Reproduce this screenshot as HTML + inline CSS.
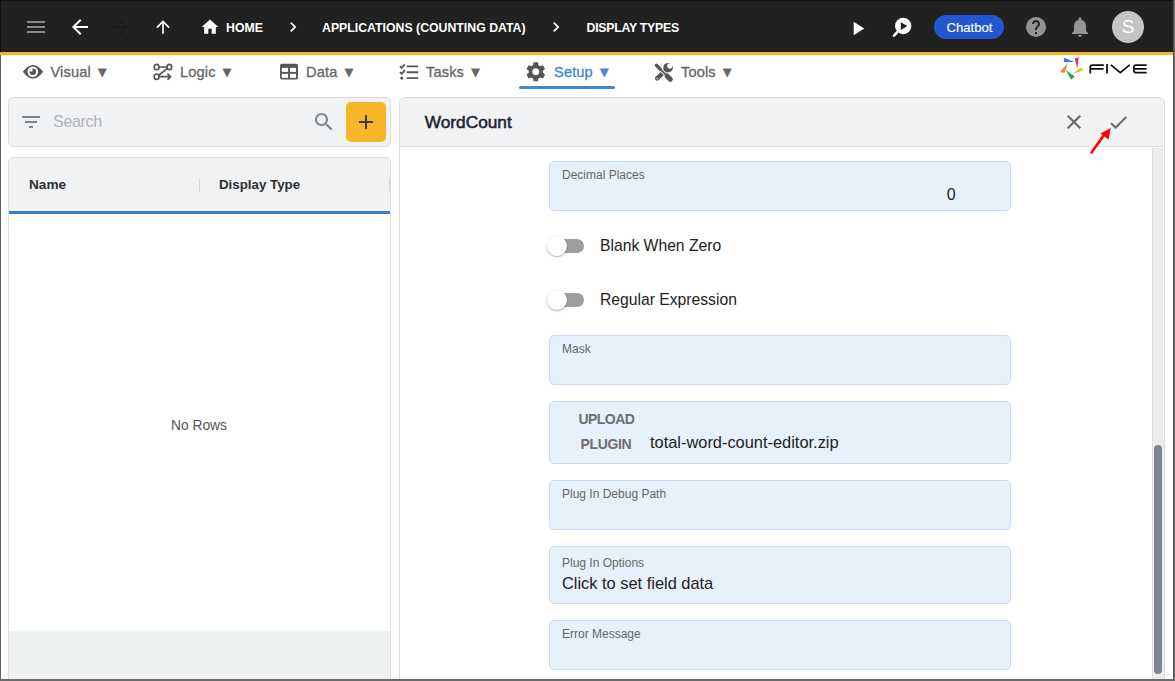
<!DOCTYPE html>
<html><head><meta charset="utf-8">
<style>
*{box-sizing:border-box;margin:0;padding:0}
html,body{width:1175px;height:681px;overflow:hidden;background:#fff;font-family:"Liberation Sans",sans-serif}
.a{position:absolute}
.t{position:absolute;white-space:nowrap;line-height:1}
svg{position:absolute;display:block}
#top{left:0;top:0;width:1175px;height:52px;background:#212121}
#yl{left:0;top:52px;width:1175px;height:3px;background:#f8b526}
.crumb{color:#fff;font-weight:700;font-size:12.3px}
.menu{color:#666;font-size:14.6px;letter-spacing:0.15px;-webkit-text-stroke:0.3px #666}
.panel{background:#f1f2f4;border:1px solid #dcdde0;border-radius:5px}
.field{position:absolute;left:549px;width:462px;background:#e8f1fb;border:1px solid #cbdcf0;border-radius:5px}
.lbl{position:absolute;left:12px;font-size:12px;color:#666;white-space:nowrap;line-height:1}
.val{font-size:16px;color:#222}
</style></head><body>
<!-- top bar -->
<div id="top" class="a"></div>
<div id="yl" class="a"></div>
<!-- hamburger -->
<svg style="left:24px;top:15px" width="24" height="24" viewBox="0 0 24 24"><path fill="#8a8a8a" d="M3 18h18v-2H3v2zm0-5h18v-2H3v2zm0-7v2h18V6H3z"/></svg>
<!-- back -->
<svg style="left:68px;top:15px" width="24" height="24" viewBox="0 0 24 24"><path fill="#fff" d="M20 11H7.83l5.59-5.59L12 4l-8 8 8 8 1.41-1.41L7.83 13H20v-2z"/></svg>
<!-- forward -->
<svg style="left:108px;top:15px" width="24" height="24" viewBox="0 0 24 24"><path fill="#1a1a1a" d="M12 4l-1.41 1.41L16.17 11H4v2h12.17l-5.58 5.59L12 20l8-8z"/></svg>
<!-- up -->
<svg style="left:153px;top:17px" width="20" height="20" viewBox="0 0 24 24"><path fill="#fff" d="M4 12l1.41 1.41L11 7.83V20h2V7.83l5.58 5.59L20 12l-8-8-8 8z"/></svg>
<!-- home -->
<svg style="left:200px;top:17px" width="20" height="20" viewBox="0 0 24 24"><path fill="#fff" d="M10 20v-6h4v6h5v-8h3L12 3 2 12h3v8z"/></svg>
<div class="t crumb" style="left:226px;top:22px">HOME</div>
<svg style="left:283px;top:17px" width="20" height="20" viewBox="0 0 24 24"><path fill="#fff" d="M10 6L8.59 7.41 13.17 12l-4.58 4.59L10 18l6-6z"/></svg>
<div class="t crumb" style="left:322px;top:22px">APPLICATIONS (COUNTING DATA)</div>
<svg style="left:545.5px;top:17px" width="20" height="20" viewBox="0 0 24 24"><path fill="#fff" d="M10 6L8.59 7.41 13.17 12l-4.58 4.59L10 18l6-6z"/></svg>
<div class="t crumb" style="left:586.5px;top:22px;letter-spacing:-0.25px">DISPLAY TYPES</div>
<!-- play -->
<svg style="left:846px;top:16.5px" width="23" height="23" viewBox="0 0 24 24"><path fill="#fff" d="M8 5v14l11-7z"/></svg>
<!-- search play -->
<svg style="left:891px;top:17px" width="22" height="22" viewBox="0 0 22 22">
<circle cx="12.2" cy="9" r="8.2" fill="#fff"/>
<path d="M9.8 5.3v7.6l6.6-3.8z" fill="#212121"/>
<path d="M6 15.5L3 18.7" stroke="#fff" stroke-width="2.6" stroke-linecap="round"/>
</svg>
<!-- chatbot -->
<div class="a" style="left:934px;top:15px;width:70px;height:24px;border-radius:12px;background:#2357cf"></div>
<div class="t" style="left:946.5px;top:21px;color:#fff;font-size:13.1px;-webkit-text-stroke:0.15px #fff">Chatbot</div>
<!-- help -->
<svg style="left:1024px;top:15px" width="24" height="24" viewBox="0 0 24 24"><circle cx="12" cy="12" r="10" fill="#949494"/><path fill="#212121" d="M11 19h2v-2h-2v2zm4.07-7.75l-.9.92C13.45 12.9 13 13.5 13 15h-2v-.5c0-1.1.45-2.1 1.17-2.83l1.24-1.26c.37-.36.59-.86.59-1.41 0-1.1-.9-2-2-2s-2 .9-2 2H8c0-2.210 1.79-4 4-4s4 1.79 4 4c0 .88-.36 1.68-.93 2.25z"/></svg>
<!-- bell -->
<svg style="left:1068px;top:15px" width="24" height="24" viewBox="0 0 24 24"><path fill="#949494" d="M12 22c1.1 0 2-.9 2-2h-4c0 1.1.89 2 2 2zm6-6v-5c0-3.07-1.64-5.64-4.5-6.32V4c0-.83-.67-1.5-1.5-1.5s-1.5.67-1.5 1.5v.68C7.63 5.36 6 7.92 6 11v5l-2 2v1h16v-1l-2-2z"/></svg>
<!-- avatar -->
<div class="a" style="left:1112px;top:11px;width:32px;height:32px;border-radius:50%;background:#c4c4c4"></div>
<div class="t" style="left:1112px;top:17px;width:32px;text-align:center;color:#fff;font-size:19px">S</div>

<!-- menu bar -->
<svg style="left:18px;top:58px" width="30" height="28" viewBox="18 58 30 28">
<path d="M22.9 71.8Q33 58.2 43.1 71.8Q33 85.4 22.9 71.8Z" fill="#555"/>
<circle cx="32.8" cy="71.8" r="5.3" fill="#fff"/>
<circle cx="32.8" cy="71.8" r="3.3" fill="#555"/>
<path d="M32.5 71.5V68.6A3 3 0 0 0 29.6 71.5Z" fill="#fff"/>
</svg>
<div class="t menu" style="left:50.5px;top:64.5px">Visual ▼</div>
<div class="t menu" style="left:180px;top:64.5px">Logic ▼</div>
<div class="t menu" style="left:306px;top:64.5px">Data ▼</div>
<div class="t menu" style="left:426px;top:64.5px">Tasks ▼</div>
<div class="t menu" style="left:554px;top:64.5px;color:#3d86d8;-webkit-text-stroke-color:#3d86d8">Setup ▼</div>
<div class="t menu" style="left:681px;top:64.5px">Tools ▼</div>
<div class="a" style="left:519px;top:86px;width:96px;height:3px;border-radius:2px;background:#3d86d8"></div>


<!-- logic icon -->
<svg style="left:148px;top:58px" width="30" height="28" viewBox="148 58 30 28" fill="none" stroke="#555" stroke-width="1.7">
<ellipse cx="156.6" cy="67" rx="2.4" ry="2.7"/>
<ellipse cx="169.4" cy="67" rx="2.4" ry="2.7"/>
<ellipse cx="156.6" cy="76.7" rx="2.4" ry="2.7"/>
<path d="M159 67H167M167.3 68.6L158.6 75.2M159 76.7H170.5M167.4 73.6L170.5 76.7L167.4 79.8"/>
</svg>
<!-- data icon -->
<svg style="left:275px;top:58px" width="30" height="28" viewBox="275 58 30 28">
<rect x="280" y="63.8" width="18" height="15.8" rx="1.8" fill="#555"/>
<rect x="281.8" y="67.9" width="6.3" height="4" fill="#fff"/>
<rect x="290" y="67.9" width="6" height="4" fill="#fff"/>
<rect x="281.8" y="73.8" width="6.3" height="4.1" fill="#fff"/>
<rect x="290" y="73.8" width="6" height="4.1" fill="#fff"/>
</svg>
<!-- tasks icon -->
<svg style="left:394px;top:58px" width="30" height="28" viewBox="394 58 30 28" fill="none" stroke="#555">
<path d="M406.7 66.4H418.2M406.7 72.2H418.2M406.7 78.1H418.2" stroke-width="1.9"/>
<path d="M400 66.2L401.7 68L404.8 64.4M400 72L401.7 73.8L404.8 70.2" stroke-width="1.8"/>
<circle cx="401.8" cy="78.1" r="1.6" fill="#555" stroke="none"/>
</svg>
<!-- gear -->
<svg style="left:524.1px;top:60.2px" width="23.6" height="23.6" viewBox="0 0 24 24"><path fill="#555" d="M19.14 12.94c.04-.3.06-.61.06-.94 0-.32-.02-.64-.07-.94l2.03-1.58c.18-.14.23-.41.12-.61l-1.920-3.32c-.12-.22-.37-.29-.59-.22l-2.39.96c-.5-.38-1.03-.7-1.62-.94l-.36-2.54c-.04-.24-.24-.41-.48-.41h-3.84c-.24 0-.43.17-.47.41l-.36 2.54c-.59.24-1.13.57-1.62.94l-2.39-.96c-.22-.08-.47 0-.59.22L2.74 8.87c-.12.21-.08.47.12.61l2.03 1.58c-.05.3-.09.63-.09.94s.02.64.07.94l-2.03 1.58c-.18.14-.23.41-.12.61l1.92 3.32c.12.22.37.29.59.22l2.39-.96c.5.38 1.03.7 1.62.94l.36 2.54c.05.24.24.41.48.41h3.84c.24 0 .44-.17.47-.41l.36-2.54c.59-.24 1.13-.56 1.62-.94l2.39.96c.22.08.47 0 .59-.22l1.92-3.32c.12-.22.07-.47-.12-.61l-2.01-1.58zM12 15.6c-1.98 0-3.6-1.62-3.6-3.6s1.62-3.6 3.6-3.6 3.6 1.62 3.6 3.6-1.62 3.6-3.6 3.6z"/></svg>
<!-- tools -->
<svg style="left:650px;top:58px" width="30" height="28" viewBox="650 58 30 28" fill="none" stroke="#555" stroke-linecap="round">
<circle cx="668.1" cy="67.7" r="4.8" fill="#555" stroke="none"/>
<circle cx="669.8" cy="65.9" r="2.6" fill="#fff" stroke="none"/>
<path d="M669.8 65.9L673.5 59.5L678 64.5Z" fill="#fff" stroke="none"/>
<path d="M657.2 78.4L665 71" stroke-width="4.4"/>
<path d="M659.5 68.5L666.5 75.5" stroke-width="3.6" stroke="#fff" stroke-linecap="butt"/>
<path d="M656.3 65.2L660.4 69.3" stroke-width="3.3"/>
<path d="M660 68.9L666 74.9" stroke-width="1.7" stroke-linecap="butt"/>
<path d="M667 76L670.3 79.3" stroke-width="5"/>
<circle cx="657.2" cy="78.4" r="0.9" fill="#bbb" stroke="none"/>
</svg>
<!-- FIVE logo -->
<svg style="left:1055px;top:54px" width="100" height="30" viewBox="1055 54 100 30">
<path d="M1063.6 57.6L1064.2 62.3L1074.3 62.1Z" fill="#3d7fdc"/>
<path d="M1074.8 58.8L1078.7 57L1077.3 68.2Z" fill="#e03340"/>
<path d="M1080.6 67.8L1084 70.3L1072.6 73.8Z" fill="#f6b82b"/>
<path d="M1071 79.8L1074.9 76.5L1065.8 70Z" fill="#3ea14d"/>
<path d="M1059.9 72.3L1064.6 72.8L1068 62.8Z" fill="#f47f2a"/>
<g fill="none" stroke="#111" stroke-width="1.75">
<path d="M1090.25 73.6V67.2Q1090.25 65 1092.5 65H1103.8M1091.2 68.9H1103.6"/>
<path d="M1107 64.1V73.6"/>
<path d="M1110.9 64.8L1120.3 72.7L1129.6 64.8"/>
<path d="M1146.7 65H1136Q1133.9 65 1133.9 67.2V70.5Q1133.9 72.7 1136 72.7H1146.7M1134.8 68.85H1146.6"/>
</g>
</svg>

<!-- left panel -->
<div class="a panel" style="left:8px;top:97px;width:383px;height:50px"></div>
<svg style="left:19px;top:110px" width="24" height="24" viewBox="0 0 24 24"><path fill="#7a858e" d="M10 18h4v-2h-4v2zM3 6v2h18V6H3zm3 7h12v-2H6v2z"/></svg>
<div class="t" style="left:53px;top:112.5px;font-size:16.2px;letter-spacing:-0.4px;color:#b0b3b8">Search</div>
<svg style="left:312px;top:110px" width="24" height="24" viewBox="0 0 24 24"><path fill="#7a858e" d="M15.5 14h-.79l-.28-.27C15.41 12.59 16 11.11 16 9.5 16 5.91 13.09 3 9.5 3S3 5.910 3 9.5 5.91 16 9.5 16c1.61 0 3.09-.59 4.23-1.57l.27.28v.79l5 4.99L20.49 19l-4.99-5zm-6 0C7.01 14 5 11.99 5 9.5S7.01 5 9.5 5 14 7.01 14 9.5 11.99 14 9.5 14z"/></svg>
<div class="a" style="left:346px;top:102px;width:40px;height:40px;border-radius:5px;background:#f7b52a"></div>
<svg style="left:354px;top:110px" width="24" height="24" viewBox="0 0 24 24"><path fill="#3d3d3d" d="M19 13h-6v6h-2v-6H5v-2h6V5h2v6h6v2z"/></svg>

<div class="a" style="left:8px;top:157px;width:383px;height:530px;border:1px solid #dcdde0;border-radius:5px;background:#fff;overflow:hidden">
  <div class="a" style="left:0;top:0;width:381px;height:53px;background:#f1f2f4"></div>
  <div class="a" style="left:0;top:53px;width:381px;height:3px;background:#3a7bd5"></div>
  <div class="a" style="left:0;top:473px;width:381px;height:60px;background:#eef1f2"></div>
</div>
<div class="t" style="left:29px;top:178px;font-size:13.6px;font-weight:700;color:#2e2e2e">Name</div>
<div class="a" style="left:199px;top:178px;width:1px;height:14px;background:#d8d8d8"></div>
<div class="t" style="left:219px;top:178px;font-size:13.3px;font-weight:700;color:#2e2e2e">Display Type</div>
<div class="a" style="left:389px;top:178px;width:1px;height:14px;background:#d8d8d8"></div>
<div class="t" style="left:171px;top:419px;font-size:13.8px;color:#555">No Rows</div>

<!-- right panel -->
<div class="a" style="left:399px;top:97px;width:766px;height:600px;border:1px solid #dcdde0;border-radius:5px;background:#fff;overflow:hidden">
  <div class="a" style="left:0;top:0;width:764px;height:49px;background:#f1f2f4;border-bottom:1px solid #dcdde0"></div>
  <div class="a" style="left:752px;top:50px;width:12px;height:560px;background:#ececec;border-left:1px solid #dedede"></div>
  <div class="a" style="left:754px;top:347px;width:8px;height:229px;border-radius:4px;background:#7c8394"></div>
</div>
<div class="t" style="left:424.8px;top:114px;font-size:17.25px;color:#1e2330;-webkit-text-stroke:0.55px #1e2330">WordCount</div>
<svg style="left:1062px;top:110px" width="24" height="24" viewBox="0 0 24 24"><path fill="#666" d="M19 6.41L17.59 5 12 10.59 6.41 5 5 6.41 10.59 12 5 17.59 6.41 19 12 13.41 17.59 19 19 17.59 13.41 12z"/></svg>
<svg style="left:1106.7px;top:110.7px" width="22.8" height="22.8" viewBox="0 0 24 24"><path fill="#666" d="M9 16.17L4.83 12l-1.42 1.41L9 19 21 7l-1.41-1.41z"/></svg>
<!-- red arrow -->
<svg style="left:1085px;top:122px" width="32" height="36" viewBox="1085 122 32 36">
<line x1="1091.5" y1="152.5" x2="1104" y2="135" stroke="#f00" stroke-width="2.6" stroke-linecap="round"/>
<path d="M1110.8 128 L1100.5 133.5 L1108.5 139.5 Z" fill="#f00"/>
</svg>

<!-- form fields -->
<div class="field" style="top:161px;height:50px"><div class="lbl" style="top:7px">Decimal Places</div></div>
<div class="t val" style="left:946.7px;top:187px">0</div>

<div class="a" style="left:549px;top:239px;width:35px;height:14px;border-radius:7px;background:#9e9e9e"></div>
<div class="a" style="left:547px;top:236px;width:20px;height:20px;border-radius:50%;background:#fff;box-shadow:0 1px 2px rgba(0,0,0,.35)"></div>
<div class="t val" style="left:600px;top:238px;font-size:15.7px">Blank When Zero</div>

<div class="a" style="left:549px;top:293px;width:35px;height:14px;border-radius:7px;background:#9e9e9e"></div>
<div class="a" style="left:547px;top:290px;width:20px;height:20px;border-radius:50%;background:#fff;box-shadow:0 1px 2px rgba(0,0,0,.35)"></div>
<div class="t val" style="left:600px;top:292px;font-size:15.7px">Regular Expression</div>

<div class="field" style="top:335px;height:50px"><div class="lbl" style="top:7px">Mask</div></div>

<div class="field" style="top:401px;height:63px"></div>
<div class="t" style="left:578.5px;top:412px;font-size:14px;letter-spacing:-0.55px;font-weight:700;color:#6f6f6f">UPLOAD</div>
<div class="t" style="left:580.5px;top:437px;font-size:14px;letter-spacing:-0.35px;font-weight:700;color:#6f6f6f">PLUGIN</div>
<div class="t val" style="left:650px;top:434px;font-size:16.4px">total-word-count-editor.zip</div>

<div class="field" style="top:480px;height:50px"><div class="lbl" style="top:7px">Plug In Debug Path</div></div>
<div class="field" style="top:546px;height:58px"><div class="lbl" style="top:9.5px">Plug In Options</div></div>
<div class="t val" style="left:562px;top:575px;font-size:16.4px">Click to set field data</div>
<div class="field" style="top:620px;height:50px"><div class="lbl" style="top:7px">Error Message</div></div>

<!-- frame borders -->
<div class="a" style="left:0;top:0;width:1175px;height:1px;background:rgba(0,0,0,.45)"></div>
<div class="a" style="left:0;top:0;width:1px;height:52px;background:rgba(0,0,0,.5)"></div>
<div class="a" style="left:0;top:55px;width:1px;height:626px;background:#5f5f5f"></div>
<div class="a" style="left:1173px;top:0;width:2px;height:681px;background:#6a6a6a"></div>
<div class="a" style="left:1173px;top:0;width:1px;height:681px;background:#585858"></div>
<div class="a" style="left:0;top:679px;width:1175px;height:2px;background:#6a6a6a"></div>
</body></html>
